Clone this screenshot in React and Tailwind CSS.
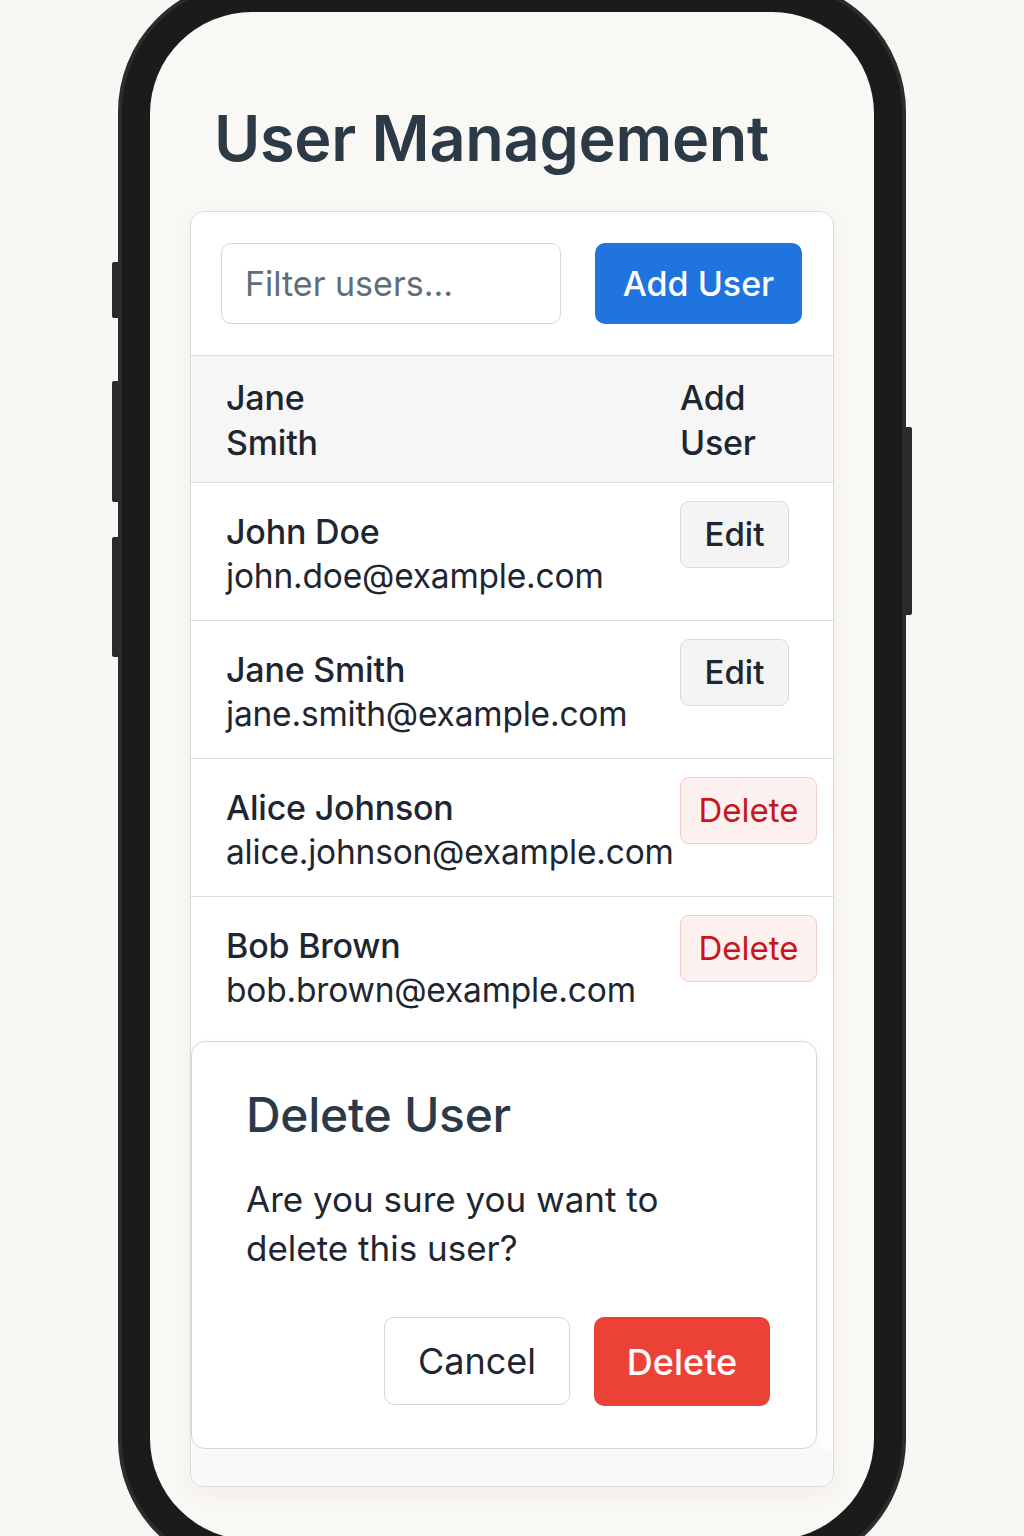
import React from 'react';

const users = [
  { name: 'John Doe', email: 'john.doe@example.com', action: 'edit' },
  { name: 'Jane Smith', email: 'jane.smith@example.com', action: 'edit' },
  { name: 'Alice Johnson', email: 'alice.johnson@example.com', action: 'delete' },
  { name: 'Bob Brown', email: 'bob.brown@example.com', action: 'delete' },
];

function UserRow({ user, last }) {
  return (
    <div className={`flex px-[35px] ${last ? 'h-[144px]' : 'h-[138px] border-b border-[#d6dee4]'}`}>
      <div className="w-[454px] shrink-0 pt-[26px] leading-[45px] tracking-[-0.2px] text-[#1e2631]">
        <div className="text-[34px] font-medium">{user.name}</div>
        <div className="text-[33.5px]">{user.email}</div>
      </div>
      <div className="shrink-0 pt-[18px]">
        {user.action === 'edit' ? (
          <button className="h-[67px] w-[109px] rounded-[9px] border border-[#d6dde2] bg-[#f4f4f4] text-[33px] font-medium text-[#1e2631]">
            Edit
          </button>
        ) : (
          <button className="h-[67px] w-[137px] rounded-[9px] border border-[#f6c9c9] bg-[#fdf1f0] text-[33px] text-[#c8161d]">
            Delete
          </button>
        )}
      </div>
    </div>
  );
}

export default function App() {
  return (
    <div className="h-[1536px] w-full overflow-hidden bg-[#f9f7f3] font-['Inter',sans-serif]">
      <div className="relative mx-auto mt-[-20px] w-[788px]">
        {/* side buttons */}
        <div className="absolute left-[-6px] top-[282px] h-[56px] w-[6px] rounded-l-[2px] bg-[#2a2a2a]" />
        <div className="absolute left-[-6px] top-[401px] h-[121px] w-[6px] rounded-l-[2px] bg-[#2a2a2a]" />
        <div className="absolute left-[-6px] top-[557px] h-[120px] w-[6px] rounded-l-[2px] bg-[#2a2a2a]" />
        <div className="absolute right-[-6px] top-[447px] h-[188px] w-[6px] rounded-r-[2px] bg-[#2a2a2a]" />

        <div className="h-[1592px] rounded-[132px] border-[4px] border-[#2c2c2c] bg-[#1b1b1b] p-[28px]">
          <div className="h-full rounded-[102px] bg-[#faf8f4] px-[40px] pt-[96px]">
            <h1 className="pl-[24px] text-[63px] font-semibold leading-[60px] tracking-[-0.3px] text-[#2c3a48]">
              User Management
            </h1>

            <div className="mt-[43px] overflow-hidden rounded-[14px] border border-[#d3dce2] bg-white shadow-[0_8px_20px_rgba(120,110,90,0.06)]">
              {/* toolbar */}
              <div className="flex items-center gap-[34px] border-b border-[#d6dee4] px-[30px] py-[31px]">
                <div className="flex h-[81px] w-[340px] items-center rounded-[10px] border border-[#cfd9df] px-[23px] text-[34px] text-[#5f6e7a]">
                  Filter users...
                </div>
                <button className="h-[81px] w-[207px] rounded-[10px] bg-[#1f74de] text-[34px] font-medium text-white">
                  Add User
                </button>
              </div>

              {/* header */}
              <div className="flex h-[127px] border-b border-[#d6dee4] bg-[#f6f6f6] px-[35px] pt-[19px] text-[34px] font-medium leading-[45px] tracking-[-0.2px] text-[#1e2631]">
                <div className="w-[454px] shrink-0">
                  <div>Jane</div>
                  <div>Smith</div>
                </div>
                <div>
                  <div>Add</div>
                  <div>User</div>
                </div>
              </div>

              {users.map((u, i) => (
                <UserRow key={u.email} user={u} last={i === users.length - 1} />
              ))}

              {/* confirm dialog */}
              <div className="h-[408px] w-[626px] rounded-[14px] border border-[#cfd9df] bg-white pl-[54px] pr-[46px] pt-[43px] shadow-[0_6px_14px_rgba(0,0,0,0.06)]">
                <h2 className="text-[48px] font-medium leading-[60px] tracking-[-0.3px] text-[#2c3a48]">Delete User</h2>
                <p className="mt-[30px] text-[35px] leading-[49px] text-[#1e2631]">
                  Are you sure you want to
                  <br />
                  delete this user?
                </p>
                <div className="mt-[44px] flex justify-end gap-[24px]">
                  <button className="h-[88px] w-[186px] rounded-[10px] border border-[#cfd9df] bg-white text-[36px] text-[#1e2631]">
                    Cancel
                  </button>
                  <button className="h-[89px] w-[176px] rounded-[10px] bg-[#ec4137] text-[36px] font-medium text-white">
                    Delete
                  </button>
                </div>
              </div>
              <div className="h-[37px] bg-[#f9f9f8]" />
            </div>
          </div>
        </div>
      </div>
    </div>
  );
}
